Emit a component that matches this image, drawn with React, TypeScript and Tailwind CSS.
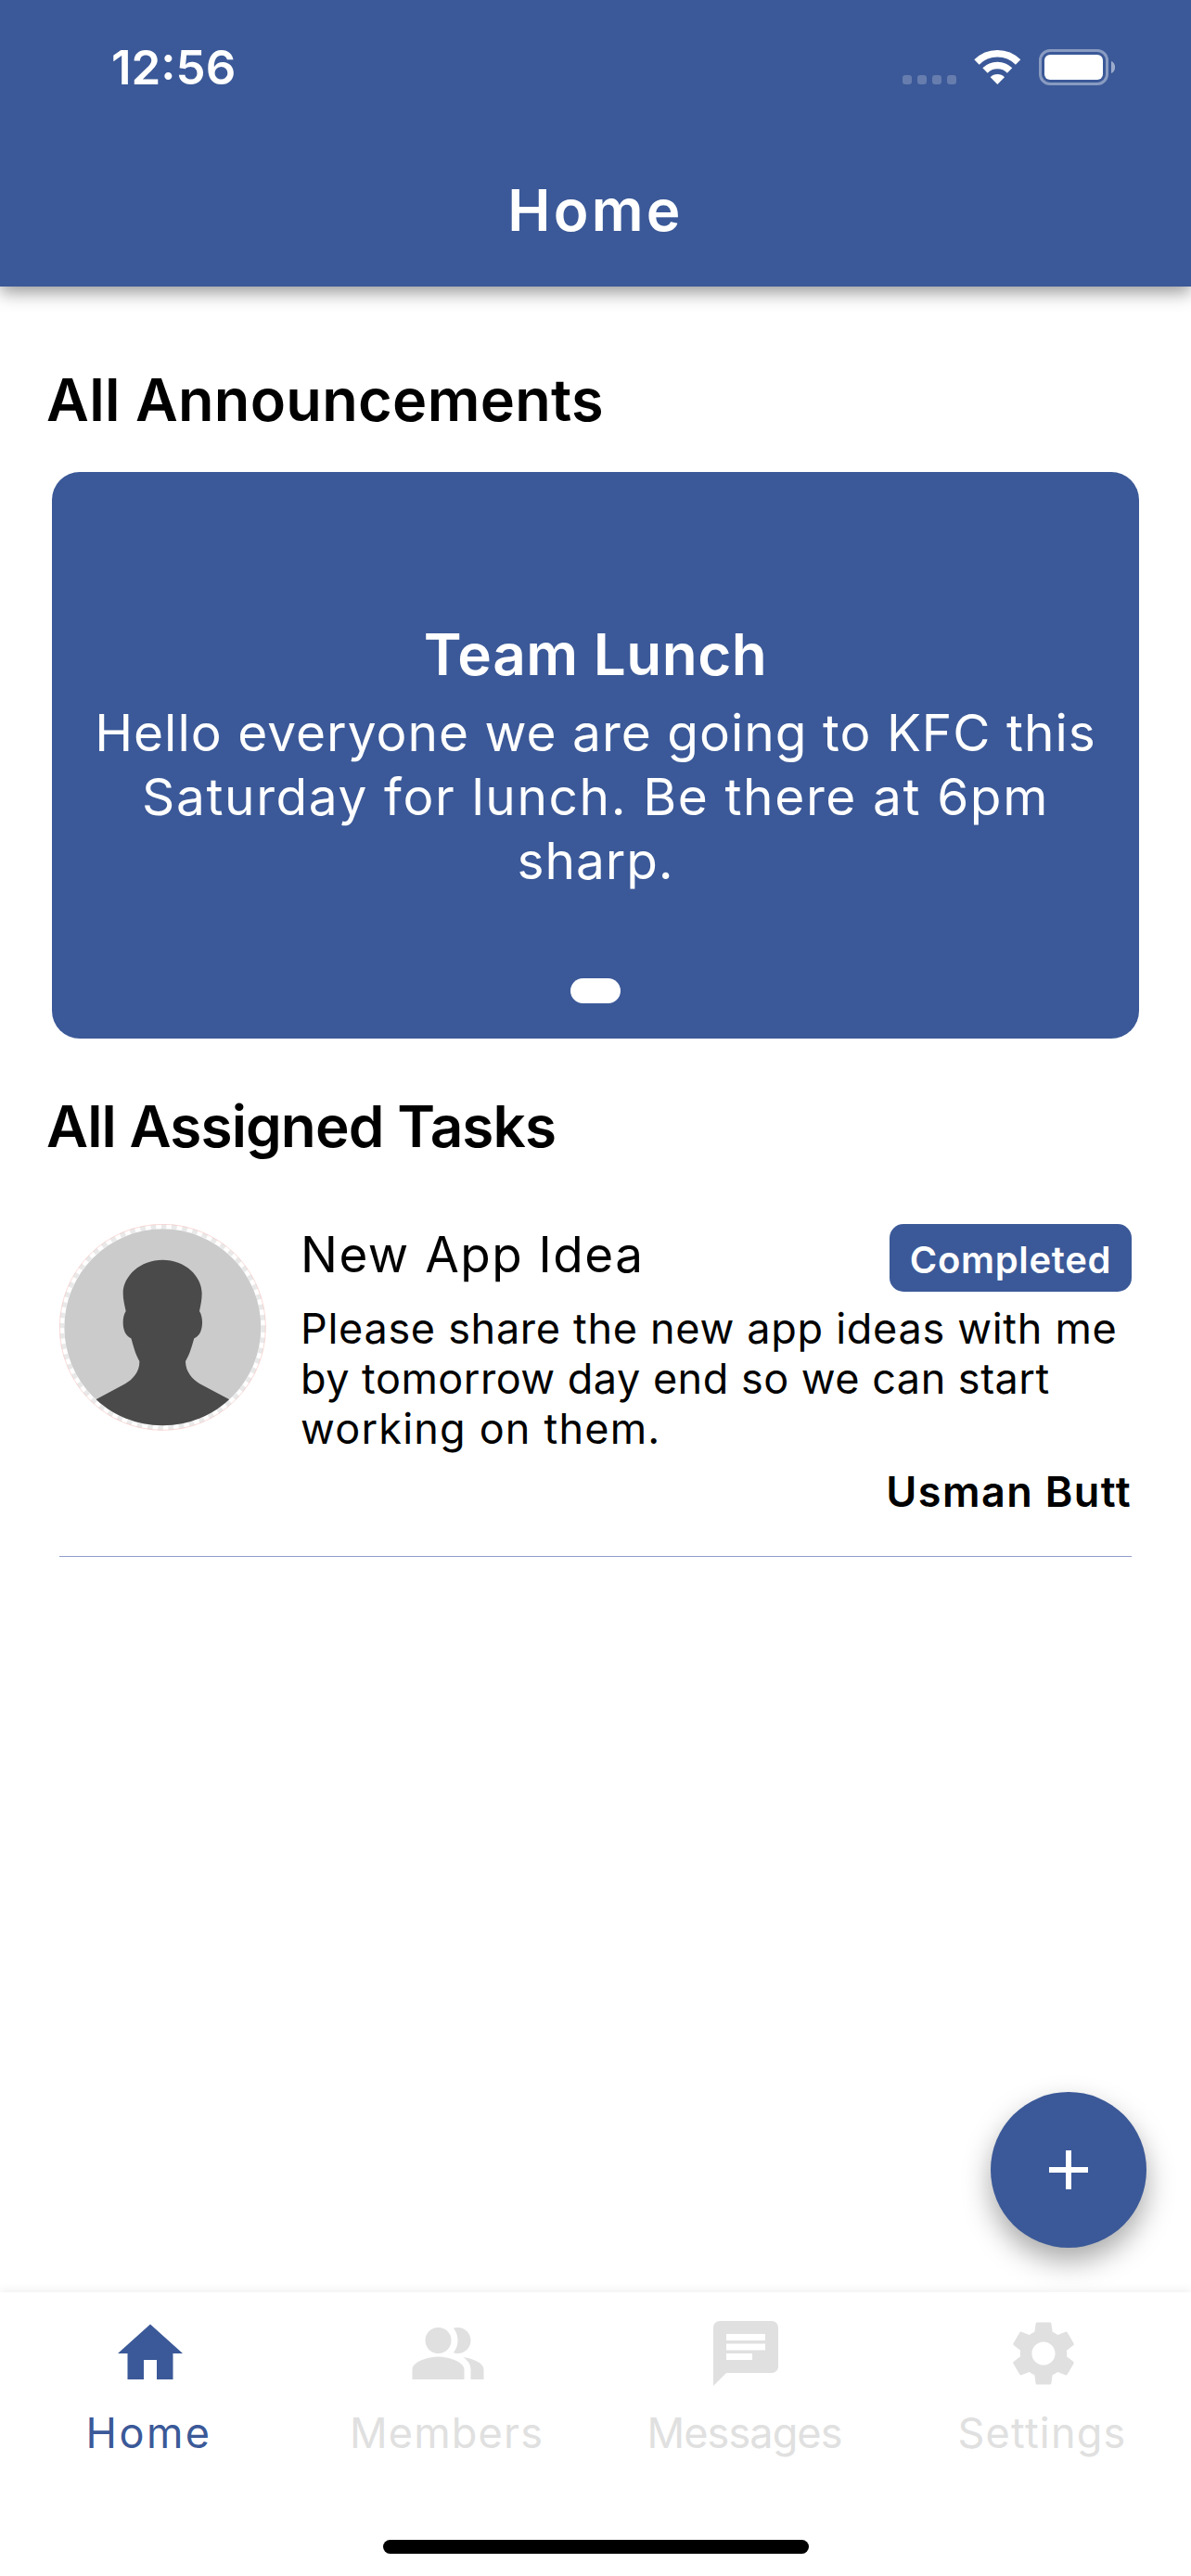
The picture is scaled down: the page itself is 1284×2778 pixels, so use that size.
import type { ReactNode } from 'react';
import { MdChat, MdHome, MdPeopleAlt, MdSettings } from 'react-icons/md';

function StatusIcons() {
  return (
    <svg width="229" height="39" viewBox="0 0 229 39" fill="none" aria-hidden="true">
      <g fill="#fff" fillOpacity="0.22">
        <rect x="0" y="28" width="10" height="10" rx="3" />
        <rect x="16" y="28" width="10" height="10" rx="3" />
        <rect x="32" y="28" width="10" height="10" rx="3" />
        <rect x="48" y="28" width="10" height="10" rx="3" />
      </g>
      <g stroke="#fff" strokeWidth="7.6">
        <path d="M80 14A31.5 31.5 0 0 1 124.6 14" />
        <path d="M89 23A18.8 18.8 0 0 1 115.6 23" />
      </g>
      <path d="M94.7 30.3A10.5 10.5 0 0 1 110 30.3L102.3 38Z" fill="#fff" />
      <rect x="148.5" y="1.5" width="72" height="36" rx="10.5" stroke="#fff" strokeOpacity="0.4" strokeWidth="3" />
      <rect x="153" y="6" width="63" height="27" rx="6" fill="#fff" />
      <path d="M225 13C230.500 15 230.500 24 225 26Z" fill="#fff" fillOpacity="0.5" />
    </svg>
  );
}

function Avatar() {
  return (
    <svg className="shrink-0" width="223" height="223" viewBox="42 60 669 669" aria-hidden="true">
      <defs>
        <clipPath id="face">
          <circle cx="376" cy="394" r="318" />
        </clipPath>
      </defs>
      <circle cx="376" cy="394" r="326" fill="#fff" stroke="#e9e9e9" strokeWidth="15" strokeDasharray="17 17" />
      <circle cx="376" cy="394" r="333" fill="none" stroke="#f8c9c4" strokeWidth="2" />
      <circle cx="376" cy="394" r="318" fill="#cbcbcb" />
      <path
        clipPath="url(#face)"
        fill="#4a4a4a"
        d="M376 176C448 176 503 228 503 284C503 305 499 322 495 342C506 358 507 392 498 410C493 420 486 426 478 430C472 448 466 478 450 504C450 538 472 562 496 577L592 628V740H160V628L255 577C280 562 302 538 301 504C286 478 280 448 274 430C266 426 259 420 254 410C245 392 246 358 257 342C253 322 248 305 248 284C248 228 304 176 376 176Z"
      />
    </svg>
  );
}

function Tab({ icon, label, tone, spacing }: { icon: ReactNode; label: string; tone: string; spacing: string }) {
  return (
    <div className={`flex flex-1 flex-col items-center pt-6 ${tone}`}>
      <div className="ml-[2px] size-[84px]">{icon}</div>
      <span className={`mt-[17px] text-[45px] leading-[54px] ${spacing}`}>{label}</span>
    </div>
  );
}

export default function App() {
  return (
    <div className="relative flex h-[2778px] w-[1284px] flex-col overflow-hidden bg-white font-['Inter',sans-serif] text-black">
      <header className="h-[309px] bg-[#3b5998] text-white shadow-[0_6px_18px_rgba(0,0,0,0.42)]">
        <div className="flex h-[145px] items-center justify-between pr-[82px] pl-[120px]">
          <span className="pt-px text-[51px] font-semibold">12:56</span>
          <StatusIcons />
        </div>
        <h1 className="text-center text-[62px] leading-[163px] font-semibold tracking-[3.200px]">Home</h1>
      </header>

      <main className="flex-1">
        <h2 className="mt-[83px] ml-[50px] text-[63px] leading-[78px] font-semibold tracking-[0.300px]">All Announcements</h2>

        <section className="mx-[56px] mt-[39px] flex h-[611px] flex-col items-center rounded-[30px] bg-[#3b5998] pt-[159px] text-center text-white">
          <h3 className="text-[62px] leading-[76px] font-semibold tracking-[0.500px]">Team Lunch</h3>
          <p className="mt-3 flex flex-col items-center text-[55px] leading-[69px] whitespace-nowrap">
            <span className="tracking-[1px]">Hello everyone we are going to KFC this</span>
            <span className="tracking-[1.600px]">Saturday for lunch. Be there at 6pm</span>
            <span className="tracking-[0.900px]">sharp.</span>
          </p>
          <span className="mt-[92px] h-[27px] w-[54px] rounded-full bg-white" />
        </section>

        <h2 className="mt-[55px] ml-[50px] text-[62px] leading-[79px] font-semibold tracking-[-0.900px]">All Assigned Tasks</h2>

        <article className="mx-[64px] mt-[66px] flex border-b border-[#8e9dc9] pb-[42px]">
          <Avatar />
          <div className="ml-[37px] flex-1">
            <div className="flex items-start justify-between">
              <h3 className="text-[53px] leading-[67px] tracking-[1.500px]">New App Idea</h3>
              <span className="h-[73px] w-[261px] rounded-[15px] bg-[#3b5998] text-center text-[40px] leading-[77px] font-semibold tracking-[0.700px] text-white">
                Completed
              </span>
            </div>
            <p className="mt-[13px] flex flex-col text-[45px] leading-[54px] whitespace-nowrap">
              <span className="tracking-[0.700px]">Please share the new app ideas with me</span>
              <span className="tracking-[0.500px]">by tomorrow day end so we can start</span>
              <span className="tracking-[1.200px]">working on them.</span>
            </p>
            <p className="mt-[14px] text-right text-[45px] leading-[54px] font-semibold tracking-[1.400px]">Usman Butt</p>
          </div>
        </article>
      </main>

      <button
        aria-label="Add"
        className="absolute top-[2256px] left-[1068px] flex size-[168px] items-center justify-center rounded-full bg-[#3b5998] shadow-[0_14px_30px_rgba(0,0,0,0.34)]"
      >
        <svg width="42" height="42" viewBox="0 0 42 42" stroke="#fff" strokeWidth="6" aria-hidden="true">
          <path d="M0 21H42M21 0V42" />
        </svg>
      </button>

      <nav className="h-[306px] bg-white shadow-[0_-3px_9px_rgba(0,0,0,0.06)]">
        <div className="flex">
          <Tab icon={<MdHome className="size-full" />} label="Home" tone="text-[#3b5998]" spacing="tracking-[2.500px]" />
          <Tab icon={<MdPeopleAlt className="size-full" />} label="Members" tone="text-[#e0e0e0]" spacing="tracking-[1.200px]" />
          <Tab icon={<MdChat className="size-full" />} label="Messages" tone="text-[#e0e0e0]" spacing="tracking-[-0.900px]" />
          <Tab icon={<MdSettings className="size-full" />} label="Settings" tone="text-[#e0e0e0]" spacing="tracking-[1.200px]" />
        </div>
        <div className="mx-auto mt-[88px] h-[15px] w-[459px] rounded-full bg-black" />
      </nav>
    </div>
  );
}
